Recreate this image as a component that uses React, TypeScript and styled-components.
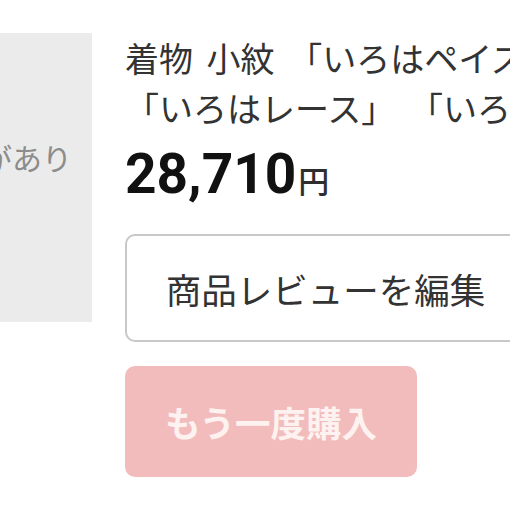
import React from "react";
import styled, { createGlobalStyle } from "styled-components";

const Global = createGlobalStyle`
  html, body {
    margin: 0;
    padding: 0;
    background: #ffffff;
    overflow: hidden;
  }
  body {
    font-family: Roboto, "Noto Sans CJK JP", sans-serif;
  }
`;

const Page = styled.div`
  display: flex;
  align-items: flex-start;
  gap: 33px;
  padding-top: 33px;
  width: 700px;
`;

const ImageBox = styled.div`
  flex-shrink: 0;
  width: 92px;
  height: 289px;
  background: #ebebeb;
  display: flex;
  justify-content: flex-end;
  align-items: flex-start;
  padding: 103px 20px 0 0;
  box-sizing: border-box;
  overflow: hidden;
`;

const NoImageText = styled.span`
  white-space: nowrap;
  font-family: "Noto Sans CJK JP", sans-serif;
  font-size: 30px;
  line-height: 42px;
  color: #8c8c8c;
`;

const Info = styled.div`
  display: flex;
  flex-direction: column;
  align-items: flex-start;
  width: 520px;
`;

const Title = styled.div`
  width: 520px;
  font-family: "Noto Sans CJK JP", sans-serif;
  font-size: 34px;
  line-height: 50px;
  word-spacing: 6px;
  color: #333333;
`;

const Price = styled.div`
  margin-top: 9px;
  display: flex;
  align-items: baseline;
  line-height: 64px;
  color: #111111;
`;

const Amount = styled.span`
  font-family: Roboto, sans-serif;
  font-weight: 700;
  font-size: 55px;
`;

const Yen = styled.span`
  font-family: "Noto Sans CJK JP", sans-serif;
  font-weight: 500;
  font-size: 31px;
  color: #2e2e2e;
  margin-left: 2px;
`;

const ReviewButton = styled.button`
  margin-top: 22px;
  width: 401px;
  height: 108px;
  box-sizing: border-box;
  border: 2px solid #c8c8c8;
  border-radius: 10px;
  background: #ffffff;
  display: flex;
  align-items: center;
  justify-content: center;
  padding: 0;
  font-family: "Noto Sans CJK JP", sans-serif;
  font-size: 35.5px;
  color: #333333;
`;

const BuyAgainButton = styled.button`
  margin-top: 24px;
  width: 292px;
  height: 111px;
  box-sizing: border-box;
  border: none;
  border-radius: 10px;
  background: #f2bcbd;
  display: flex;
  align-items: center;
  justify-content: center;
  padding: 0;
  font-family: "Noto Sans CJK JP", sans-serif;
  font-weight: 700;
  font-size: 35.5px;
  color: #fdf2ef;
`;

export default function App() {
  return (
    <>
      <Global />
      <Page>
        <ImageBox>
          <NoImageText>画像があり</NoImageText>
        </ImageBox>
        <Info>
          <Title>
            着物 小紋 「いろはペイズリー」 「いろはレース」 「いろは小花」
          </Title>
          <Price>
            <Amount>28,710</Amount>
            <Yen>円</Yen>
          </Price>
          <ReviewButton>商品レビューを編集</ReviewButton>
          <BuyAgainButton>もう一度購入</BuyAgainButton>
        </Info>
      </Page>
    </>
  );
}
